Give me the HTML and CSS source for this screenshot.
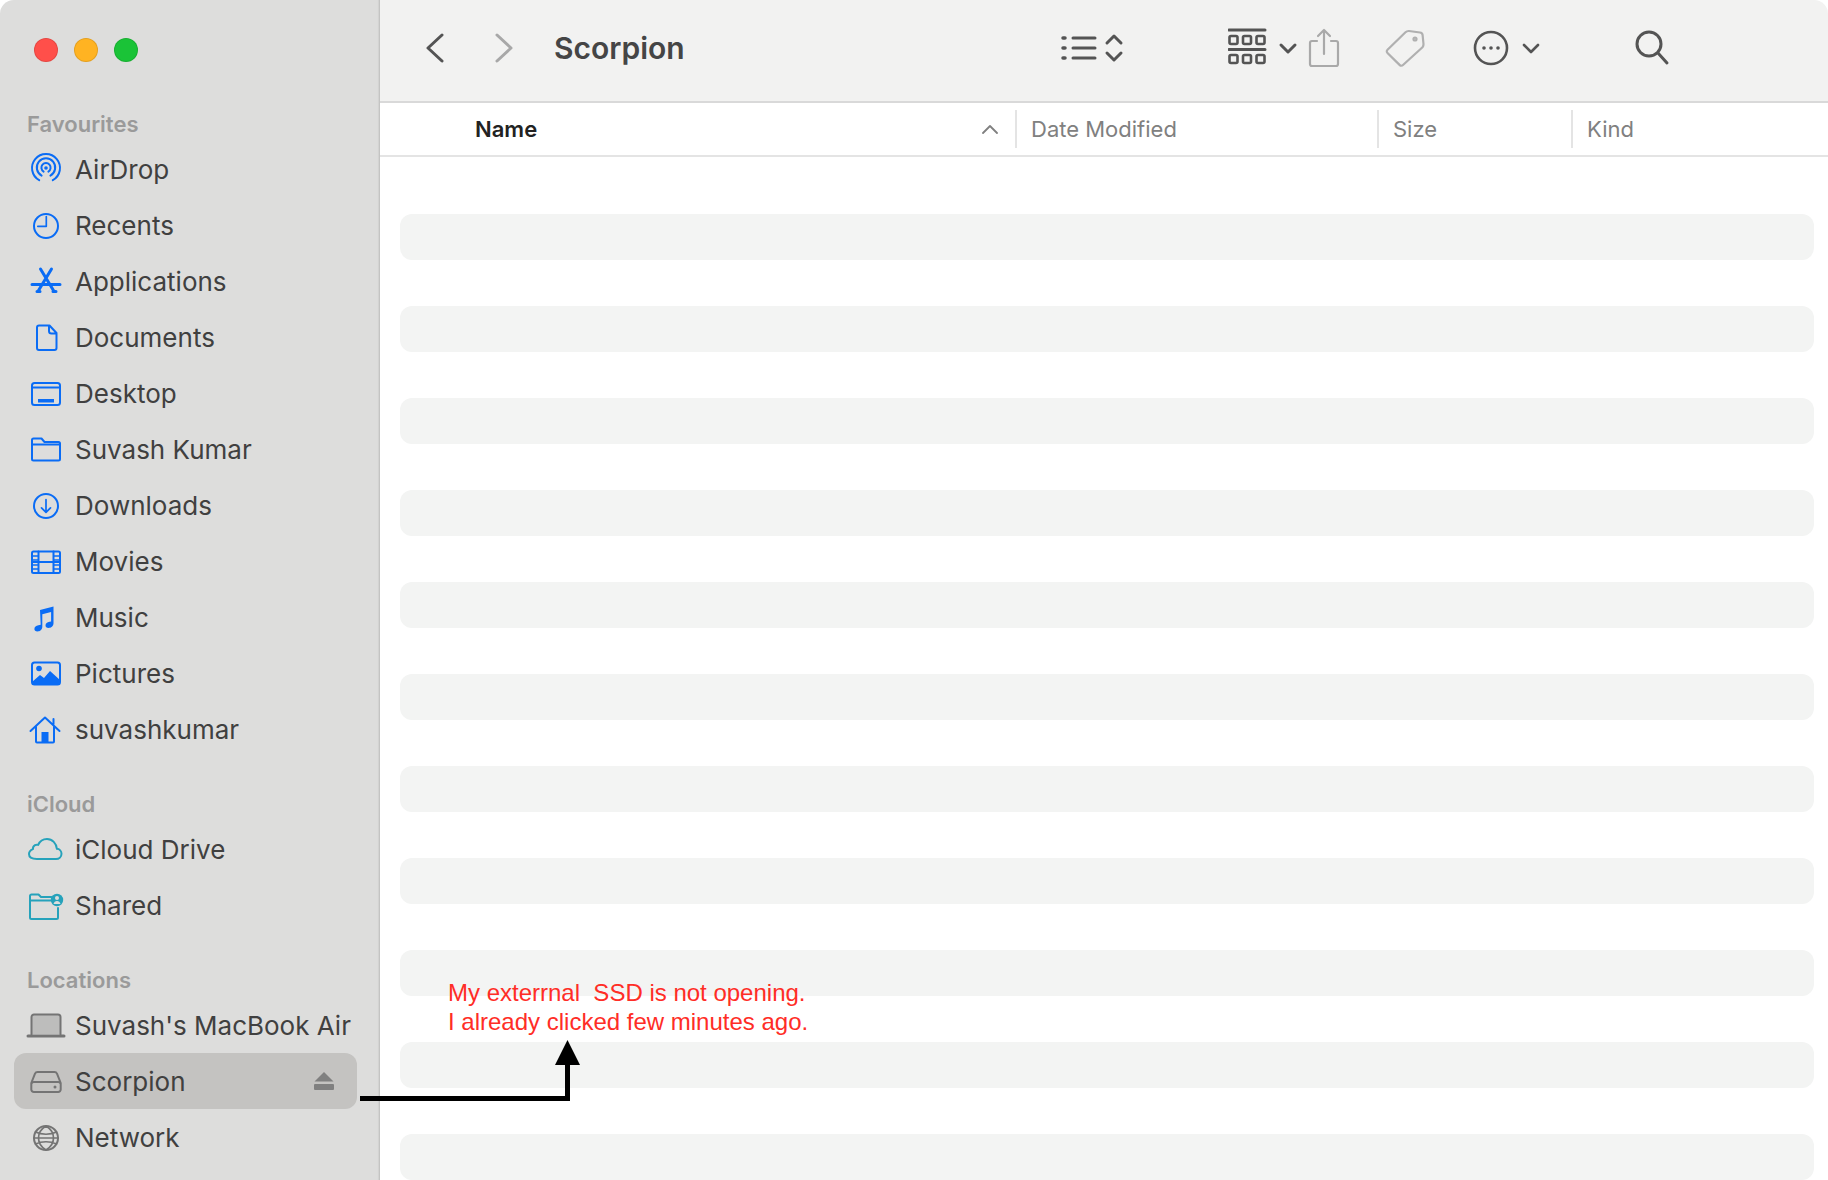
FILE: index.html
```html
<!DOCTYPE html>
<html lang="en">
<head>
<meta charset="utf-8">
<title>Scorpion</title>
<link rel="stylesheet" href="styles.css">
</head>
<body>
<div class="window">
  <aside class="sidebar">
    <div class="lights"><span class="light red"></span><span class="light amber"></span><span class="light green"></span></div>

    <div class="label first">Favourites</div>
    <div class="row"><svg class="ico blue" viewBox="0 0 40 40"><path d="M13.2 31.2a14 14 0 1 1 13.6 0M15.6 26.6a9.2 9.2 0 1 1 8.8 0M17.6 22.6a4.6 4.6 0 1 1 4.8 0"/><circle class="fill" cx="20" cy="19" r="1.8"/></svg><span>AirDrop</span></div>
    <div class="row"><svg class="ico blue" viewBox="0 0 40 40"><circle cx="20" cy="21" r="12"/><path d="M20.3 11.5v9.8h-8.5" class="thin"/></svg><span>Recents</span></div>
    <div class="row"><svg class="ico blue" viewBox="0 0 40 40"><path d="M14.5 8l13 21.5M25.5 8l-13 21.5M6 23.5h28" class="bold"/><path d="M11 30.5h3M27 30.5h3" class="bold"/></svg><span>Applications</span></div>
    <div class="row"><svg class="ico blue" viewBox="0 0 40 40"><path d="M13 8.5h10.5l7 7.5v15a2 2 0 0 1-2 2H13a2 2 0 0 1-2-2v-20.500a2 2 0 0 1 2-2zM23 8.500v5.500a2.500 2.500 0 0 0 2.500 2.500h5"/></svg><span>Documents</span></div>
    <div class="row"><svg class="ico blue" viewBox="0 0 40 40"><rect x="6" y="10" width="28" height="22" rx="2.500"/><path d="M6 14.500h28"/><rect class="fill" x="12" y="26" width="16" height="3.500"/></svg><span>Desktop</span></div>
    <div class="row"><svg class="ico blue" viewBox="0 0 40 40"><path d="M7.500 9.500h8l3 3.500h14a1.500 1.500 0 0 1 1.500 1.500v15.500a1.500 1.500 0 0 1-1.500 1.500h-25a1.500 1.500 0 0 1-1.500-1.500v-19a1.500 1.500 0 0 1 1.500-1.500zM6 15.500h28"/></svg><span>Suvash Kumar</span></div>
    <div class="row"><svg class="ico blue" viewBox="0 0 40 40"><circle cx="20" cy="21" r="12"/><path d="M20 14.500v12.500M15.500 22.800l4.500 4.500 4.500-4.500" class="thin"/></svg><span>Downloads</span></div>
    <div class="row"><svg class="ico blue" viewBox="0 0 40 40"><rect x="6" y="10.500" width="28" height="21.500" rx="1.500"/><path d="M6 21h28M12.500 10.500v21.500M27.500 10.500v21.500"/><path d="M6 15h6M6 19h6M6 24h6M6 28h6M28 15h6M28 19h6M28 24h6M28 28h6" class="thin"/></svg><span>Movies</span></div>
    <div class="row"><svg class="ico blue" viewBox="0 0 40 40"><path class="fill" d="M14 13l13.500-3.500v16.800c0 3-2.500 4.700-5 4.700-1.900 0-3-1-3-2.500 0-2 1.700-3.200 4-3.700l1.600-.4V15l-8.800 2.200v12.600c0 3-2.400 4.700-4.900 4.700-1.900 0-3-1-3-2.500 0-2 1.700-3.200 4-3.700l2.300-.5z"/></svg><span>Music</span></div>
    <div class="row"><svg class="ico blue" viewBox="0 0 40 40"><rect x="6" y="9.500" width="28" height="22" rx="2.500"/><path class="fill" d="M6 29l8-7 4 3 6-7 10 9v3a2 2 0 0 1-2 2H8a2 2 0 0 1-2-2z"/><circle class="fill" cx="13" cy="15.500" r="2.800"/></svg><span>Pictures</span></div>
    <div class="row"><svg class="ico blue" viewBox="0 0 40 40"><path d="M4.500 22L19 8.500 33.500 22M10 18v14.500a1 1 0 0 0 1 1h16a1 1 0 0 0 1-1V18M27.500 10v5"/><rect class="fill" x="15.500" y="23" width="7" height="10.500"/></svg><span>suvashkumar</span></div>

    <div class="label">iCloud</div>
    <div class="row"><svg class="ico teal" viewBox="0 0 40 40"><path d="M11 30.500h19c3.200 0 5.500-2.400 5.500-5.200 0-2.700-2-4.800-4.600-5-.5-5.500-4.600-9.800-9.900-9.800-4 0-7.300 2.400-8.800 5.900-1-.4-2.200-.3-3.200.3-1.500.9-2.200 2.400-2.100 4-2.300 1-3.900 2.800-3.900 4.900 0 2.700 2.500 4.900 8 4.900z" transform="translate(0 -.5)"/></svg><span>iCloud Drive</span></div>
    <div class="row"><svg class="ico teal" viewBox="0 0 40 40"><path d="M27 15.500H4M4 31V11a1.500 1.500 0 0 1 1.500-1.500h7l2.500 2.500h10.500M32 23v9.500a1.500 1.500 0 0 1-1.500 1.500h-25A1.500 1.500 0 0 1 4 32.500V28"/><circle class="fill" cx="31" cy="15" r="6.200"/><circle class="cut" cx="31" cy="13" r="2"/><path class="cut" d="M27.500 19c.5-2 1.800-3 3.500-3s3 1 3.500 3z"/></svg><span>Shared</span></div>

    <div class="label">Locations</div>
    <div class="row"><svg class="ico gray" viewBox="0 0 40 40"><path class="tint" d="M6 12a2 2 0 0 1 2-2h24a2 2 0 0 1 2 2v17H6z"/><path d="M5.500 29.500V12a2.500 2.500 0 0 1 2.500-2.500h24a2.500 2.500 0 0 1 2.500 2.500v17.500"/><path class="bold" d="M2 31h36"/></svg><span>Suvash's MacBook Air</span></div>
    <div class="row active"><svg class="ico gray" viewBox="0 0 40 40"><path d="M11.500 11h17c1.300 0 2 .6 2.500 1.700l3.700 9.300v6.500a2.500 2.500 0 0 1-2.500 2.500H7.800a2.500 2.500 0 0 1-2.500-2.500V22L9 12.700c.5-1.100 1.200-1.700 2.500-1.700zM5.500 22.500a2.500 2.500 0 0 1 2.300-1.500h24.400a2.500 2.500 0 0 1 2.300 1.500"/><circle class="fill" cx="29" cy="26" r="1.500"/></svg><span>Scorpion</span><svg class="eject" viewBox="0 0 20 18"><path d="M10 0l9.500 9.500H.5z"/><rect y="12" width="20" height="6" rx="1"/></svg></div>
    <div class="row"><svg class="ico gray" viewBox="0 0 40 40"><circle cx="20" cy="21" r="12"/><path class="thin" d="M20 9c-5 3-7.500 7-7.500 12s2.500 9 7.500 12M20 9c5 3 7.500 7 7.500 12s-2.500 9-7.500 12M9.500 15c6 3 15 3 21 0M8 21h24M9.500 27c6-3 15-3 21 0"/></svg><span>Network</span></div>
  </aside>

  <main class="content">
    <header class="toolbar">
      <svg class="t-nav" viewBox="0 0 20 30"><path d="M17 2L3 15l14 13"/></svg>
      <svg class="t-nav off" viewBox="0 0 20 30"><path d="M3 2l14 13L3 28"/></svg>
      <h1 class="title">Scorpion</h1>
      <svg class="t-list" viewBox="0 0 70 40"><path d="M15 10h22M15 20h22M15 30h22"/><path class="dot" d="M5 10h2M5 20h2M5 30h2"/><path d="M49 15l7-7 7 7M49 25l7 7 7-7"/></svg>
      <svg class="t-gallery" viewBox="0 0 70 40"><path d="M1 2h36M1 21.500h36"/><g class="boxes"><rect x="1.500" y="8" width="8" height="8" rx="1.500"/><rect x="15" y="8" width="8" height="8" rx="1.500"/><rect x="28.500" y="8" width="8" height="8" rx="1.500"/><rect x="1.500" y="27" width="8" height="8" rx="1.500"/><rect x="15" y="27" width="8" height="8" rx="1.500"/><rect x="28.500" y="27" width="8" height="8" rx="1.500"/></g><path d="M53 17l7 7 7-7"/></svg>
      <svg class="t-share" viewBox="0 0 32 40"><path d="M9 13H4a2 2 0 0 0-2 2v21a2 2 0 0 0 2 2h24a2 2 0 0 0 2-2V15a2 2 0 0 0-2-2h-5M16 2v24M10 8l6-6 6 6"/></svg>
      <svg class="t-tag" viewBox="0 0 40 40"><path d="M24 3l11 1.500c1.500.2 2.400 1 2.600 2.500l.9 9c.1 1.200-.2 2.200-1 3.200L18 37c-1 1-2.300 1-3.200.1L2.500 25c-1-1-1-2.300 0-3.300L20.500 4.300c1-1 2.200-1.400 3.500-1.300z" transform="translate(0 0)"/><circle cx="30" cy="11" r="1.500"/></svg>
      <svg class="t-more" viewBox="0 0 70 40"><circle cx="18" cy="20" r="16"/><circle class="solid" cx="11" cy="20" r="1.800"/><circle class="solid" cx="18" cy="20" r="1.800"/><circle class="solid" cx="25" cy="20" r="1.800"/><path d="M51 17l7 7 7-7"/></svg>
      <svg class="t-search" viewBox="0 0 36 36"><circle cx="15" cy="14" r="12"/><path class="heavy" d="M24 23l9 10"/></svg>
    </header>
    <div class="cols">
      <div class="col col-name"><span>Name</span><svg class="sort" viewBox="0 0 16 10"><path d="M1 9l7-7 7 7"/></svg></div>
      <div class="col col-date">Date Modified</div>
      <div class="col col-size">Size</div>
      <div class="col col-kind">Kind</div>
    </div>
    <div class="list">
      <div class="stripe"></div><div class="stripe"></div><div class="stripe"></div><div class="stripe"></div>
      <div class="stripe"></div><div class="stripe"></div><div class="stripe"></div><div class="stripe"></div>
      <div class="stripe"></div><div class="stripe"></div><div class="stripe"></div>
    </div>
  </main>

  <p class="note">My exterrnal  SSD is not opening.<br>I already clicked few minutes ago.</p>
  <svg class="arrow" viewBox="0 0 230 70"><path d="M0 58.500h207.500V22" /><path class="head" d="M207.500 0L220 25H195z"/></svg>
</div>
</body>
</html>
```

FILE: styles.css
```css
* { box-sizing: border-box; }
html, body { margin: 0; height: 100%; background: #fff; overflow: hidden; }
body { font-family: Inter, "Liberation Sans", sans-serif; color: #404040; }
.window { position: relative; display: flex; width: 1828px; height: 1180px; overflow: hidden; border-radius: 14px 14px 0 0; }

.sidebar { width: 380px; flex: none; height: 100%; background: #dddddc; padding: 38px 22px 0 14px; border-right: 1px solid #c4c4c3; box-shadow: inset -2px 0 1px -1px #d2d2d1; }
.lights { display: flex; gap: 16px; padding-left: 20px; }
.light { width: 24px; height: 24px; border-radius: 50%; border: 1px solid rgba(0,0,0,.1); }
.red { background: #ff4f4a; }
.amber { background: #ffb322; }
.green { background: #1ac337; }

.label { height: 28px; line-height: 28px; margin: 33px 0 3px 13px; font-size: 22px; font-weight: 600; color: #9a9a9a; }
.label.first { margin-top: 48px; }
.row { display: flex; align-items: center; height: 56px; padding-left: 12px; padding-right: 23px; font-size: 26px; border-radius: 12px; }
.row span { margin-left: 9px; flex: 1; white-space: nowrap; }
.active { background: #c4c3c1; }

.ico { width: 40px; height: 40px; flex: none; fill: none; stroke-width: 2; stroke-linecap: round; stroke-linejoin: round; }
.blue { stroke: #0a6cf5; }
.blue .fill { fill: #0a6cf5; stroke: none; }
.teal { stroke: #26a2bb; }
.teal .fill { fill: #26a2bb; stroke: none; }
.teal .cut { fill: #dddddc; stroke: none; }
.gray { stroke: #747474; }
.gray .fill { fill: #747474; stroke: none; }
.gray .tint { fill: #bdbdbc; stroke: none; }
.thin { stroke-width: 1.700; }
.bold { stroke-width: 3; }
.eject { width: 20px; height: 18px; flex: none; fill: #808080; }

.content { flex: 1; min-width: 0; display: flex; flex-direction: column; height: 100%; }
.toolbar { height: 103px; flex: none; display: flex; align-items: center; background: #f2f2f1; border-bottom: 2px solid #d9d9d9; color: #454545; padding-bottom: 5px; }
.toolbar svg { flex: none; fill: none; stroke: #545454; stroke-width: 3; stroke-linecap: round; stroke-linejoin: round; }
.t-nav { width: 20px; height: 30px; margin-left: 45px; stroke-width: 2.700; }
.t-nav.off { stroke: #a8a8a8; margin-left: 49px; margin-right: 0; }
.title { margin: 0 0 0 40px; font-size: 30px; font-weight: 600; width: 504px; letter-spacing: 0; }
.t-list { width: 70px; height: 40px; margin-left: 0; }
.t-list .dot { stroke-width: 3.500; }
.t-gallery { width: 70px; height: 40px; margin-left: 100px; }
.boxes rect { stroke-width: 2.600; }
.t-share { width: 32px; height: 40px; margin-left: 10px; stroke: #a9a9a9; stroke-width: 2; }
.toolbar .t-share { stroke: #a9a9a9; stroke-width: 2.200; }
.toolbar .t-tag { width: 40px; height: 40px; margin-left: 45px; stroke: #b0b0b0; stroke-width: 2.200; }
.toolbar .t-more { width: 70px; height: 40px; margin-left: 48px; stroke-width: 2.600; }
.toolbar .t-more .solid { fill: #545454; stroke: none; }
.toolbar .t-search { width: 36px; height: 36px; margin-left: 91px; }

.cols { height: 54px; flex: none; display: flex; align-items: center; border-bottom: 2px solid #e4e4e4; font-size: 22px; color: #808080; }
.col { height: 38px; line-height: 38px; display: flex; align-items: center; border-left: 2px solid #e4e4e4; padding-left: 14px; }
.col-name { width: 635px; border-left: 0; padding-left: 95px; padding-right: 17px; justify-content: space-between; color: #222; font-weight: 600; }
.col-date { width: 362px; }
.col-size { width: 194px; }
.col-kind { flex: 1; }
.sort { width: 16px; height: 10px; fill: none; stroke: #808080; stroke-width: 1.800; stroke-linecap: round; stroke-linejoin: round; }

.list { flex: 1; min-height: 0; padding: 57px 14px 0 20px; display: flex; flex-direction: column; gap: 46px; }
.stripe { height: 46px; flex: none; border-radius: 12px; background: #f3f4f3; }

.note { position: absolute; left: 448px; top: 978px; margin: 0; font-family: "Liberation Sans", Arial, sans-serif; font-size: 24px; line-height: 29px; color: #ff2d26; white-space: pre; }
.arrow { position: absolute; left: 360px; top: 1040px; width: 230px; height: 70px; fill: none; stroke: #000; stroke-width: 5; }
.arrow .head { fill: #000; stroke: none; }
```
